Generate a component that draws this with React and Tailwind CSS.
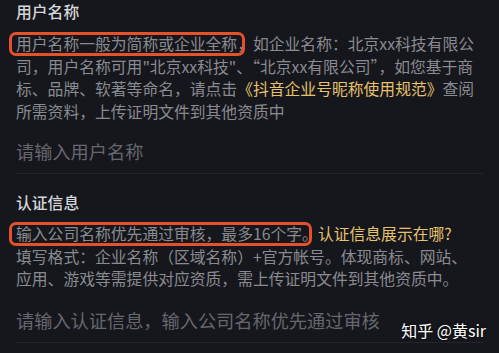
const body = 'text-[15.8px] leading-[22.5px] text-[#8a8b90] whitespace-nowrap'

function Hilite({ className }) {
  return (
    <span
      className={`pointer-events-none absolute rounded-[7px] border-[3px] border-[#e4512b] ${className}`}
    />
  )
}

export default function App() {
  return (
    <div
      className="relative h-[353px] w-[499px] overflow-hidden bg-[#16171d]"
      style={{ fontFamily: '"Noto Sans CJK SC", "Noto Sans", sans-serif' }}
    >
      <section className="px-4 pt-[1px]">
        <h2 className="text-[15.8px] leading-[22px] font-medium text-[#d6d6d8]">用户名称</h2>
        <div className={`relative mt-[10px] ${body}`}>
          <Hilite className="left-[-7px] top-[-1px] h-[24px] w-[236px]" />
          <p>用户名称一般为简称或企业全称，如企业名称：北京xx科技有限公</p>
          <p>司，用户名称可用"北京xx科技"、“北京xx有限公司”，如您基于商</p>
          <p>
            标、品牌、软著等命名，请点击
            <span className="text-[#e6c26c]">《抖音企业号昵称使用规范》</span>
            查阅
          </p>
          <p>所需资料，上传证明文件到其他资质中</p>
        </div>
        <p className="mt-[15px] text-[18.2px] leading-[26px] text-[#66676d]">请输入用户名称</p>
      </section>
      <div className="mx-4 mt-[9px] border-t border-[#24262d]" />

      <section className="px-4">
        <h2 className="mt-[18px] text-[15.8px] leading-[22px] font-medium text-[#d6d6d8]">认证信息</h2>
        <div className={`relative mt-[9px] ${body}`}>
          <Hilite className="left-[-7px] top-[-1px] h-[24px] w-[303px]" />
          <p>
            输入公司名称优先通过审核，最多16个字。
            <span className="text-[#e6c26c]">认证信息展示在哪?</span>
          </p>
          <p>填写格式：企业名称（区域名称）+官方帐号。体现商标、网站、</p>
          <p>应用、游戏等需提供对应资质，需上传证明文件到其他资质中。</p>
        </div>
        <p className="mt-[16px] text-[18.2px] leading-[26px] text-[#66676d]">
          请输入认证信息，输入公司名称优先通过审核
        </p>
      </section>
      <div className="mx-4 mt-[9px] border-t border-[#24262d]" />

      <span className="absolute right-[13px] bottom-[12px] text-[16px] leading-[22px] text-white [text-shadow:0_0_3px_rgba(0,0,0,0.8)]">
        知乎 @黄sir
      </span>
    </div>
  )
}
